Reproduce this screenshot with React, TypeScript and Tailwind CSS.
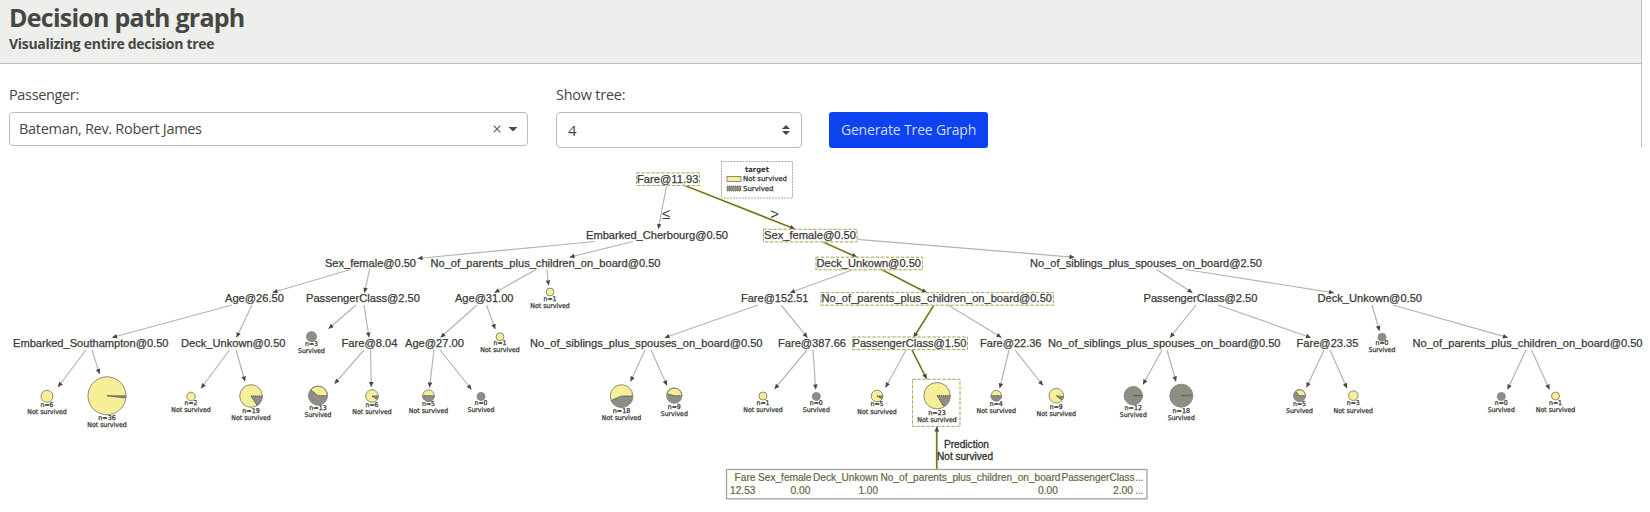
import React from "react";

type Label = { text: string; x1: number; x2: number; y: number; box?: [number, number] };
type Leaf = { x: number; y: number; r: number; n: number; ny: number; survived: boolean; fill: "y" | "g"; wedge?: [number, number] };
type Edge = [number, number, number, number, boolean?];

const PARENTS = "No_of_parents_plus_children_on_board@0.50";
const SIBLINGS = "No_of_siblings_plus_spouses_on_board@";
const YELLOW = "#f6ef97";
const GRAY = "#8d8f82";

const labels: Label[] = [
  { text: "Fare@11.93", x1: 637, x2: 698.5, y: 182.6, box: [636.5, 699.5] },
  { text: "Embarked_Cherbourg@0.50", x1: 586, x2: 728, y: 239 },
  { text: "Sex_female@0.50", x1: 764, x2: 856, y: 239, box: [763.5, 857] },
  { text: "Sex_female@0.50", x1: 325, x2: 416, y: 266.9 },
  { text: PARENTS, x1: 430.5, x2: 660.5, y: 266.9 },
  { text: "Deck_Unkown@0.50", x1: 816.5, x2: 921, y: 266.9, box: [816, 922.5] },
  { text: SIBLINGS + "2.50", x1: 1030, x2: 1262, y: 266.9 },
  { text: "Age@26.50", x1: 225, x2: 284, y: 302.3 },
  { text: "PassengerClass@2.50", x1: 306, x2: 420, y: 302.3 },
  { text: "Age@31.00", x1: 455, x2: 513.5, y: 302.3 },
  { text: "Fare@152.51", x1: 741, x2: 808.5, y: 302.3 },
  { text: PARENTS, x1: 821.5, x2: 1052, y: 302.3, box: [821, 1053.5] },
  { text: "PassengerClass@2.50", x1: 1143.5, x2: 1257.5, y: 302.3 },
  { text: "Deck_Unkown@0.50", x1: 1317.5, x2: 1422, y: 302.3 },
  { text: "Embarked_Southampton@0.50", x1: 13, x2: 168.5, y: 346.7 },
  { text: "Deck_Unkown@0.50", x1: 181, x2: 285.5, y: 346.7 },
  { text: "Fare@8.04", x1: 341.5, x2: 397.5, y: 346.7 },
  { text: "Age@27.00", x1: 405, x2: 464, y: 346.7 },
  { text: SIBLINGS + "0.50", x1: 530, x2: 762.5, y: 346.7 },
  { text: "Fare@387.66", x1: 778, x2: 846, y: 346.7 },
  { text: "PassengerClass@1.50", x1: 852.5, x2: 966.5, y: 346.7, box: [852.5, 967.5] },
  { text: "Fare@22.36", x1: 980, x2: 1041.5, y: 346.7 },
  { text: SIBLINGS + "0.50", x1: 1048, x2: 1280.5, y: 346.7 },
  { text: "Fare@23.35", x1: 1296.5, x2: 1358.5, y: 346.7 },
  { text: PARENTS, x1: 1412.5, x2: 1642.5, y: 346.7 },
];

// Wedge angles are in degrees, clockwise from east; the wedge takes the other class's colour.
const leaves: Leaf[] = [
  { x: 47, y: 396.3, r: 6, n: 6, ny: 406.9, survived: false, fill: "y" },
  { x: 107, y: 395.8, r: 19, n: 36, ny: 420.2, survived: false, fill: "y", wedge: [0, 7] },
  { x: 191, y: 396.5, r: 4.3, n: 2, ny: 405, survived: false, fill: "y" },
  { x: 251, y: 396, r: 11.3, n: 19, ny: 413, survived: false, fill: "y", wedge: [0, 57] },
  { x: 311.5, y: 336.7, r: 5, n: 3, ny: 346.2, survived: true, fill: "g" },
  { x: 318, y: 395.7, r: 9.5, n: 13, ny: 410, survived: true, fill: "g", wedge: [-140, 0] },
  { x: 372, y: 396, r: 6.3, n: 6, ny: 407, survived: false, fill: "y", wedge: [0, 35] },
  { x: 428.5, y: 395.7, r: 5.8, n: 5, ny: 406, survived: false, fill: "y", wedge: [0, 180] },
  { x: 481, y: 396.5, r: 4, n: 0, ny: 404.8, survived: true, fill: "g" },
  { x: 550, y: 292, r: 3.9, n: 1, ny: 300.7, survived: false, fill: "y" },
  { x: 500, y: 336.7, r: 3.9, n: 1, ny: 345.2, survived: false, fill: "y" },
  { x: 621.5, y: 396, r: 11.3, n: 18, ny: 413, survived: false, fill: "y", wedge: [0, 157] },
  { x: 674.3, y: 395.7, r: 7.6, n: 9, ny: 408.7, survived: true, fill: "g", wedge: [-165, 0] },
  { x: 763, y: 396, r: 4, n: 1, ny: 404.8, survived: false, fill: "y" },
  { x: 816.3, y: 396.5, r: 4, n: 0, ny: 404.8, survived: true, fill: "g" },
  { x: 877, y: 396, r: 5.8, n: 5, ny: 406.3, survived: false, fill: "y", wedge: [0, 30] },
  { x: 937, y: 395.7, r: 13.2, n: 23, ny: 414.5, survived: false, fill: "y", wedge: [0, 58] },
  { x: 996.3, y: 395.7, r: 5.3, n: 4, ny: 406.2, survived: false, fill: "y", wedge: [0, 180] },
  { x: 1056.3, y: 395.7, r: 7.3, n: 9, ny: 408.5, survived: false, fill: "y", wedge: [8, 40] },
  { x: 1133.3, y: 395.7, r: 9.2, n: 12, ny: 410, survived: true, fill: "g", wedge: [-2, 0] },
  { x: 1181.3, y: 395.7, r: 11.5, n: 18, ny: 413, survived: true, fill: "g", wedge: [-4, 0] },
  { x: 1299.5, y: 395.7, r: 6, n: 5, ny: 406.2, survived: true, fill: "g", wedge: [-130, 0] },
  { x: 1353.3, y: 395.7, r: 4.8, n: 3, ny: 405.3, survived: false, fill: "y" },
  { x: 1382, y: 337.3, r: 4, n: 0, ny: 345.2, survived: true, fill: "g" },
  { x: 1501.3, y: 396.5, r: 4, n: 0, ny: 404.8, survived: true, fill: "g" },
  { x: 1555.5, y: 396, r: 4, n: 1, ny: 404.8, survived: false, fill: "y" },
];

const edges: Edge[] = [
  [666.5, 186, 658.3, 229], [683.5, 185, 795, 229, true],
  [595, 241.5, 417.5, 258.5], [633, 241.5, 569.5, 257.2],
  [823, 242, 857, 257.2, true], [857, 239.3, 1074.5, 257.3],
  [350.5, 269.5, 272.5, 292.5], [369.5, 269.5, 364.5, 292.8],
  [536, 269.5, 494.5, 292.8], [547, 269.5, 548.5, 285.5],
  [852, 270, 790, 292.8], [880.5, 269, 927, 292.8, true],
  [1156.5, 269.5, 1192.5, 292.8], [1185.5, 269.5, 1334, 292.8],
  [232, 305, 112, 337.5], [252, 305, 236.5, 337.5],
  [356, 305, 328.5, 328.8], [364, 305, 369, 337.5],
  [477, 305, 440.5, 337.5], [486.5, 305, 495.2, 329.3],
  [758, 305, 664.5, 337.7], [781, 305, 807.5, 337.7],
  [934, 305, 913.5, 337.7, true], [948, 305, 1001.5, 337.5],
  [1196, 305, 1170, 337.7], [1218, 305, 1311, 337.7],
  [1372, 305, 1379.5, 331], [1393, 305, 1508, 337.7],
  [86, 350, 58, 387], [92, 350, 99.5, 374],
  [229.5, 350, 201, 388.5], [236, 350, 245, 381.5],
  [364, 350, 334.5, 383.8], [370.5, 350, 371.3, 387],
  [434, 350, 429.5, 387.5], [440, 350, 471.5, 389.5],
  [645, 350, 630.5, 381.5], [651, 350, 667, 385.5],
  [807, 350, 774.5, 389], [813, 350, 815.7, 389.5],
  [906, 350, 885.5, 387.5], [912, 350, 926.7, 379, true],
  [1009, 350, 999.7, 388.3], [1015, 350, 1043, 385.5],
  [1162, 350, 1143, 384.5], [1167, 350, 1176, 381.5],
  [1324, 350, 1306.5, 387.5], [1330, 350, 1347, 388.3],
  [1526, 350, 1507.5, 389.5], [1531.5, 350, 1549.5, 389.5],
  [936.8, 469, 936.8, 426.5, true],
];

function FitText({ x1, x2, y, size, children, className }: { x1: number; x2: number; y: number; size: number; children: string; className: string }) {
  return (
    <text x={x1} y={y} fontSize={size} textLength={x2 - x1} lengthAdjust="spacingAndGlyphs" className={className}>
      {children}
    </text>
  );
}

function EdgeLine({ e }: { e: Edge }) {
  const [x1, y1, x2, y2, hot] = e;
  const a = Math.atan2(y2 - y1, x2 - x1);
  const deg = (a * 180) / Math.PI;
  return (
    <g>
      {hot && <line x1={x1} y1={y1} x2={x2} y2={y2} stroke="#efe88c" strokeWidth={2.6} />}
      <line x1={x1} y1={y1} x2={x2} y2={y2} stroke={hot ? "#5f6048" : "#b4b5b0"} strokeWidth={hot ? 1.3 : 1.2} />
      <path d="M0 0L-5 -2.3V2.3Z" fill="#464742" transform={`translate(${x2} ${y2}) rotate(${deg})`} />
    </g>
  );
}

const TINY = "fill-[#30312d] stroke-[#30312d] stroke-[0.25px] font-['DejaVu_Sans',sans-serif]";

function LeafPie({ l }: { l: Leaf }) {
  const main = l.fill === "y" ? YELLOW : GRAY;
  const other = l.fill === "y" ? GRAY : YELLOW;
  const w = l.survived ? 27 : 39.5;
  const nw = l.n > 9 ? 17.5 : 13;
  let wedge: React.ReactNode = null;
  if (l.wedge) {
    const [s, t] = l.wedge.map((d) => (d * Math.PI) / 180);
    const p = (k: number) => `${l.x + l.r * Math.cos(k)} ${l.y + l.r * Math.sin(k)}`;
    wedge = <path d={`M${l.x} ${l.y}L${p(s)}A${l.r} ${l.r} 0 0 1 ${p(t)}Z`} fill={other} stroke="#50514a" strokeWidth={0.9} strokeDasharray="1.4 0.5" />;
  }
  return (
    <g>
      <circle cx={l.x} cy={l.y} r={l.r} fill={main} />
      {wedge}
      <circle cx={l.x} cy={l.y} r={l.r} fill="none" stroke="#8b8c80" strokeWidth={1} />
      <FitText x1={l.x - nw / 2} x2={l.x + nw / 2} y={l.ny} size={6.6} className={TINY}>{`n=${l.n}`}</FitText>
      <FitText x1={l.x - w / 2} x2={l.x + w / 2} y={l.ny + 7.2} size={6.6} className={TINY}>
        {l.survived ? "Survived" : "Not survived"}
      </FitText>
    </g>
  );
}

const tableText: [string, number, number, number][] = [
  ["Fare", 734.5, 755.5, 481], ["Sex_female", 758, 811.5, 481], ["Deck_Unkown", 813, 878, 481],
  ["No_of_parents_plus_children_on_board", 880.5, 1060.5, 481], ["PassengerClass", 1061.5, 1134.5, 481], ["...", 1135.5, 1143, 481],
  ["12.53", 730, 755.5, 494], ["0.00", 790.5, 810.5, 494], ["1.00", 858.5, 878, 494],
  ["0.00", 1038, 1058, 494], ["2.00", 1113, 1133, 494], ["...", 1135.5, 1143, 494],
];

function TreeGraph() {
  return (
    <svg width={1650} height={365} viewBox="0 147 1650 365" className="block font-['Liberation_Sans',sans-serif]">
      <rect x={721.5} y={161.5} width={71} height={36.5} fill="#fff" stroke="#a9aaa5" strokeDasharray="2 1" />
      <FitText x1={745} x2={769} y={171.8} size={7.4} className="fill-[#30312d] font-['DejaVu_Sans',sans-serif] font-bold">target</FitText>
      <rect x={727} y={176.5} width={14} height={5} fill={YELLOW} stroke="#8b8c80" />
      <rect x={727} y={186} width={14} height={5} fill={GRAY} stroke="#6f7066" strokeDasharray="1 1" />
      <FitText x1={743} x2={787} y={181.3} size={6.9} className={TINY}>Not survived</FitText>
      <FitText x1={743} x2={773.5} y={191.2} size={6.9} className={TINY}>Survived</FitText>
      {edges.map((e, i) => <EdgeLine key={i} e={e} />)}
      {labels.map((l, i) => (
        <g key={i}>
          {l.box && (
            <>
              <rect x={l.box[0]} y={l.y - 9.7} width={l.box[1] - l.box[0]} height={12.6} fill="none" stroke="#f3ec9c" />
              <rect x={l.box[0]} y={l.y - 9.7} width={l.box[1] - l.box[0]} height={12.6} fill="none" stroke="#a3a498" strokeDasharray="3 2" />
            </>
          )}
          <FitText x1={l.x1} x2={l.x2} y={l.y} size={11.3} className="fill-[#383935] stroke-[#383935] stroke-[0.25px]">{l.text}</FitText>
        </g>
      ))}
      <rect x={912.5} y={379.3} width={47.5} height={47} fill="none" stroke="#f3ec9c" />
      <rect x={912.5} y={379.3} width={47.5} height={47} fill="none" stroke="#a3a498" strokeDasharray="3 2" />
      {leaves.map((l, i) => <LeafPie key={i} l={l} />)}
      <text x={662} y={218.8} fontSize={15} className="fill-[#383935]">≤</text>
      <text x={770.3} y={218.6} fontSize={15} className="fill-[#383935]">&gt;</text>
      <FitText x1={944} x2={989} y={448.3} size={10.4} className="fill-[#30312d] stroke-[#30312d] stroke-[0.3px]">Prediction</FitText>
      <FitText x1={937} x2={993} y={459.7} size={10.4} className="fill-[#30312d] stroke-[#30312d] stroke-[0.3px]">Not survived</FitText>
      <rect x={726.5} y={469.5} width={420.5} height={29.3} fill="none" stroke="#a3a49c" strokeWidth={1.3} />
      {tableText.map(([t, a, b, y], i) => (
        <FitText key={i} x1={a} x2={b} y={y} size={10.2} className="fill-[#66673f] stroke-[#66673f] stroke-[0.2px]">{t}</FitText>
      ))}
    </svg>
  );
}

export default function App() {
  return (
    <div className="h-[512px] w-[1650px] overflow-hidden bg-white font-['Open_Sans','Noto_Sans',sans-serif] text-[#464742]">
      <header className="h-16 w-[1642px] border-r border-b border-[#bfc0bc] bg-[#eeeeed] pl-[9px]">
        <h1 className="pt-[3px] text-[25px] leading-[29px] font-bold tracking-[-0.75px]">Decision path graph</h1>
        <h2 className="pt-[2px] text-[14px] leading-[20px] font-bold tracking-[-0.3px]">Visualizing entire decision tree</h2>
      </header>
      <main>
        <form className="flex h-[83px] w-[1642px] items-start border-r border-[#bfc0bc] pt-5 pl-[9px]" onSubmit={(ev) => ev.preventDefault()}>
          <div className="w-[519px]">
            <label className="block h-[28px] text-[14.5px] leading-[21px] tracking-[-0.35px]">Passenger:</label>
            <div className="flex h-[34px] items-center rounded-[4px] border border-[#bbbcb7] pr-[9px] pl-[9px]">
              <span className="grow text-[14.5px] leading-5 tracking-[-0.3px]">Bateman, Rev. Robert James</span>
              <svg width="8" height="8" viewBox="0 0 8 8" className="mr-[7px]"><path d="M.7.7l6.6 6.6M7.3.7L.7 7.3" stroke="#62635e" strokeWidth="1.2" /></svg>
              <svg width="10" height="5" viewBox="0 0 10 5"><path d="M0.5 0h9L5 4.5z" fill="#464742" /></svg>
            </div>
          </div>
          <div className="ml-7 w-[246px]">
            <label className="block h-[28px] text-[14.5px] leading-[21px] tracking-[-0.25px]">Show tree:</label>
            <div className="flex h-9 items-center justify-between rounded-[4px] border border-[#bbbcb7] pr-[11px] pl-[11px]">
              <span className="text-[15px] leading-5">4</span>
              <svg width="8" height="10" viewBox="0 0 8 10"><path d="M0 4L4 0l4 4zM0 6h8L4 10z" fill="#464742" /></svg>
            </div>
          </div>
          <button className="mt-7 ml-[27px] h-9 w-[159px] rounded-[3px] bg-[#0d42f0] text-[14px] leading-5 tracking-[-0.15px] whitespace-nowrap text-[#d3daf2]">Generate Tree Graph</button>
        </form>
        <TreeGraph />
      </main>
    </div>
  );
}
